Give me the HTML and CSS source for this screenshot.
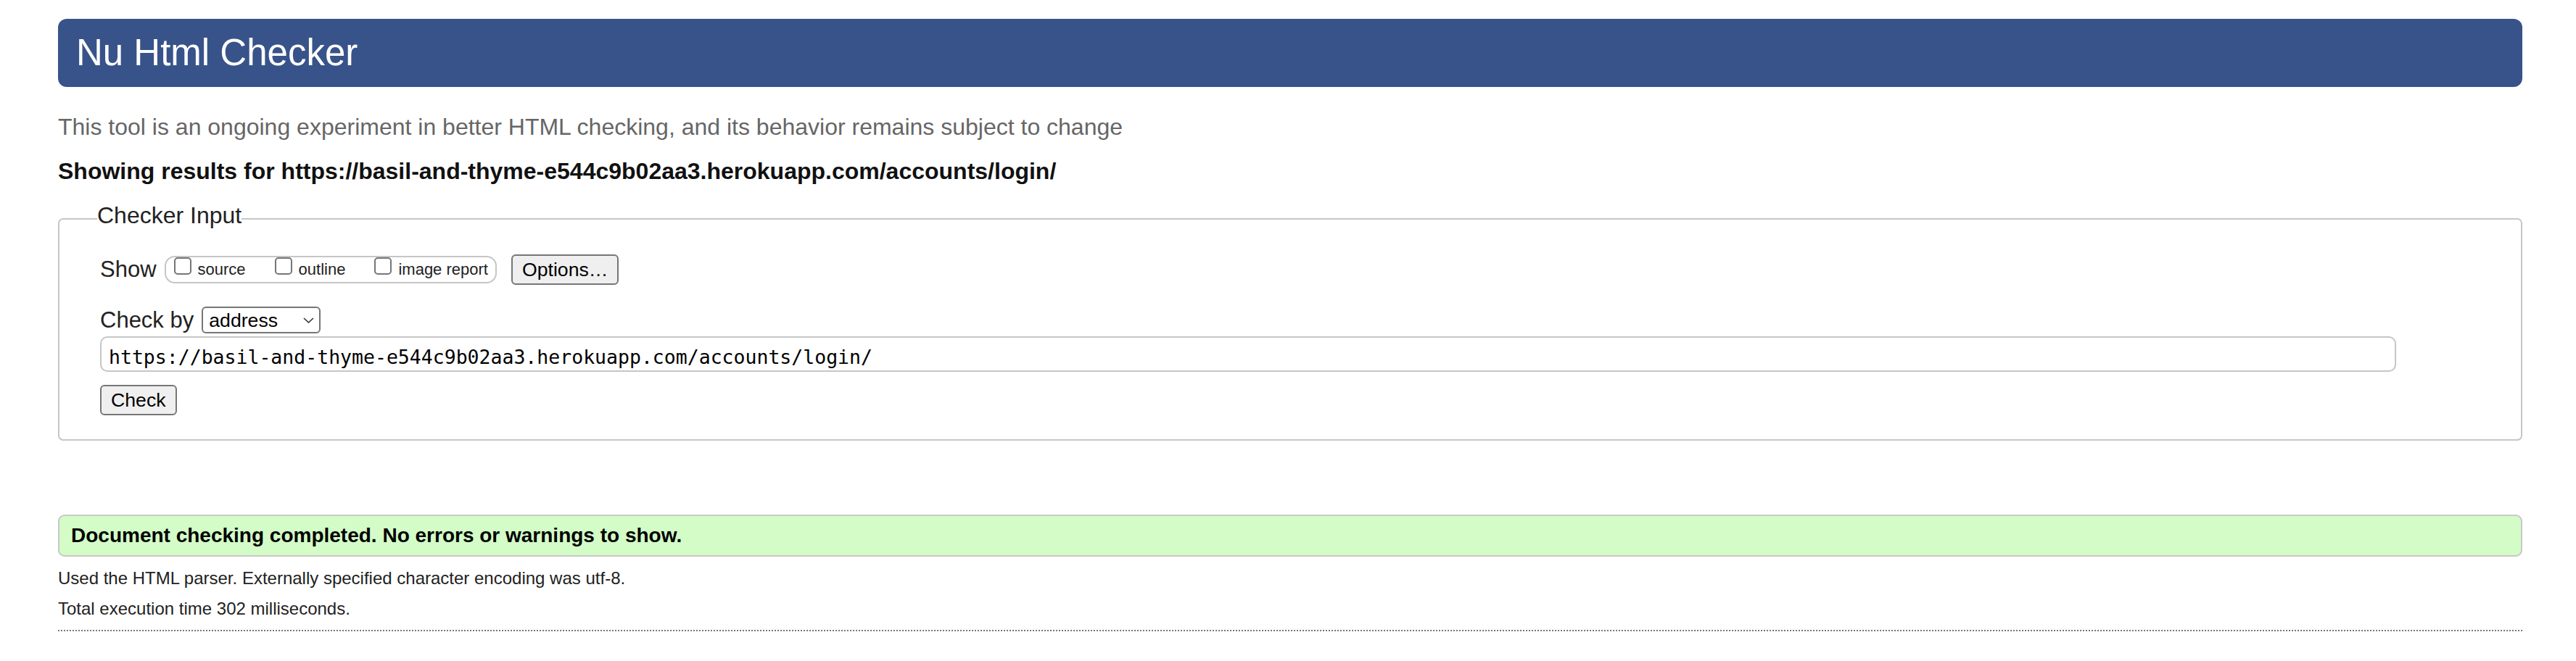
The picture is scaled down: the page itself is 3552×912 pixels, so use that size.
FILE: index.html
```html
<!DOCTYPE html>
<html lang="en">
<head>
<meta charset="utf-8">
<title>Nu Html Checker</title>
<link rel="stylesheet" href="styles.css">
</head>
<body>
<h1 class="title">Nu Html Checker</h1>
<p class="intro">This tool is an ongoing experiment in better HTML checking, and its behavior remains subject to change</p>
<p class="showing">Showing results for https://basil-and-thyme-e544c9b02aa3.herokuapp.com/accounts/login/</p>
<form class="checker">
  <fieldset class="input-set">
    <legend class="input-legend">Checker Input</legend>
    <div class="row show-row">
      <span class="field-label show-label">Show</span>
      <div class="show-group">
        <label class="opt"><input type="checkbox" class="cb"><span>source</span></label>
        <label class="opt"><input type="checkbox" class="cb"><span>outline</span></label>
        <label class="opt"><input type="checkbox" class="cb"><span>image report</span></label>
      </div>
      <button type="button" class="btn options-btn">Options…</button>
    </div>
    <div class="row by-row">
      <label class="field-label by-label" for="docselect">Check by</label>
      <span class="select-wrap">
        <select id="docselect" class="by-select"><option>address</option></select>
        <svg class="chev" width="15" height="8" viewBox="0 0 15 8"><path d="M1 1 L7.5 7 L14 1" fill="none" stroke="#333" stroke-width="1.6"/></svg>
      </span>
    </div>
    <input class="url" type="url" value="https://basil-and-thyme-e544c9b02aa3.herokuapp.com/accounts/login/">
    <div class="row submit-row"><button type="button" class="btn">Check</button></div>
  </fieldset>
</form>
<div class="result">Document checking completed. No errors or warnings to show.</div>
<p class="meta">Used the HTML parser. Externally specified character encoding was utf-8.</p>
<p class="meta">Total execution time 302 milliseconds.</p>
<div class="rule"></div>
</body>
</html>
```

FILE: styles.css
```css
html {
  background: #fff;
}

body {
  margin: 0;
  padding: 26px 74px 40px 80px;
  font-family: "Liberation Sans", Arial, Helvetica, sans-serif;
  font-size: 30px;
  color: #222;
}

.title {
  margin: 0;
  height: 94px;
  line-height: 94px;
  padding: 0 25px;
  background: #385389;
  color: #fff;
  font-size: 51px;
  font-weight: normal;
  border-radius: 12px;
}

.intro {
  margin: 37px 0 0;
  font-size: 32px;
  line-height: 36px;
  color: #666;
}

.showing {
  margin: 25px 0 0;
  font-size: 32px;
  line-height: 36px;
  font-weight: bold;
  color: #111;
}

.checker {
  margin: 0;
}

.input-set {
  margin: 26px 0 0;
  padding: 28px 56px 33px 56px;
  border: 2px solid #c6c6c6;
  border-radius: 7px;
  min-width: 0;
}

.input-legend {
  margin-left: -4px;
  padding: 0 0 9px 0;
  font-size: 32px;
  line-height: 34px;
  color: #222;
}

.row {
  display: flex;
  align-items: center;
}

.field-label {
  font-size: 31px;
  line-height: 34px;
  color: #222;
}

.show-row {
  height: 42px;
}

.show-label {
  margin-right: 11px;
}

.show-group {
  display: flex;
  align-items: center;
  height: 38px;
  box-sizing: border-box;
  border: 2px solid #c6c6c6;
  border-radius: 14px;
  padding: 0 10px 0 11px;
}

.opt {
  display: inline-flex;
  align-items: baseline;
  font-size: 22px;
  line-height: 34px;
  margin-right: 40px;
  color: #222;
}

.opt:last-child {
  margin-right: 0;
}

.cb {
  appearance: none;
  -webkit-appearance: none;
  width: 24px;
  height: 24px;
  margin: 0 9px 0 0;
  box-sizing: border-box;
  border: 2px solid #767676;
  border-radius: 5px;
  background: #fff;
}

.btn {
  height: 42px;
  box-sizing: border-box;
  padding: 0 13px;
  font-family: "Liberation Sans", Arial, Helvetica, sans-serif;
  font-size: 26.67px;
  color: #000;
  background: #efefef;
  border: 2px solid #767676;
  border-radius: 6px;
}

.options-btn {
  margin-left: 20px;
}

.by-row {
  margin-top: 30px;
  height: 37px;
}

.by-label {
  margin-right: 11px;
}

.select-wrap {
  position: relative;
  display: inline-block;
  height: 37px;
}

.by-select {
  appearance: none;
  -webkit-appearance: none;
  width: 164px;
  height: 37px;
  box-sizing: border-box;
  margin: 0;
  padding: 0 0 0 8px;
  border: 2px solid #767676;
  border-radius: 6px;
  background: #fff;
  font-family: "Liberation Sans", Arial, Helvetica, sans-serif;
  font-size: 26.67px;
  color: #000;
}

.chev {
  position: absolute;
  right: 9px;
  top: 15px;
  pointer-events: none;
}

.url {
  display: block;
  margin: 4px 0 0;
  width: calc(100% - 116px);
  height: 49px;
  box-sizing: border-box;
  border: 2px solid #c6c6c6;
  border-radius: 10px;
  padding: 8px 10px 0;
  font-family: "DejaVu Sans Mono", "Liberation Mono", monospace;
  font-size: 26.5px;
  color: #000;
  background: #fff;
}

.submit-row {
  margin-top: 18px;
}

.result {
  margin-top: 102px;
  height: 58px;
  box-sizing: border-box;
  border: 2px solid #c8c8c8;
  border-radius: 9px;
  background: #d3fcc7;
  padding: 0 16px;
  font-size: 28px;
  font-weight: bold;
  line-height: 54px;
  color: #000;
}

.meta {
  margin: 16px 0 0;
  font-size: 24px;
  line-height: 28px;
  color: #222;
}

.meta + .meta {
  margin-top: 14px;
}

.rule {
  margin-top: 15px;
  border-top: 2px dotted #777;
}
```
